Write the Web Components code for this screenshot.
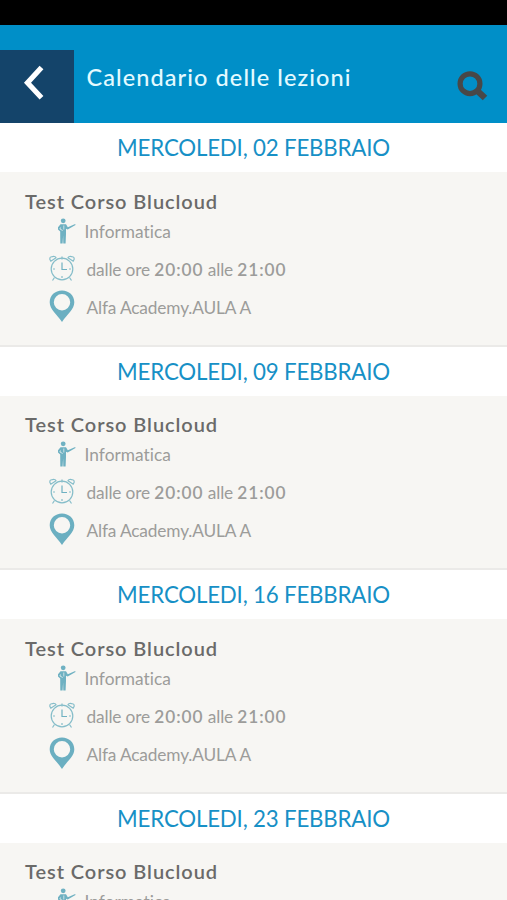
<!DOCTYPE html>
<html lang="it">
<head>
<meta charset="utf-8">
<title>Calendario delle lezioni</title>
<style>
  body{
    margin:0;
    height:900px;
    overflow:hidden;
    background:#fff;
    font-family:Lato, "Liberation Sans", sans-serif;
  }
</style>
</head>
<body>

<lesson-app>
  <app-header slot="header">Calendario delle lezioni</app-header>
  <lesson-day date="MERCOLEDI, 02 FEBBRAIO"></lesson-day>
  <lesson-day date="MERCOLEDI, 09 FEBBRAIO"></lesson-day>
  <lesson-day date="MERCOLEDI, 16 FEBBRAIO"></lesson-day>
  <lesson-day date="MERCOLEDI, 23 FEBBRAIO"></lesson-day>
</lesson-app>

<script>
class BaseElement extends HTMLElement {

    connectedCallback() {
      if (this.shadowRoot) return
      const template = document.createElement("template")
      template.innerHTML = this.getStyles() + this.getTemplate()
      this.attachShadow({mode :"open"}).appendChild(template.content.cloneNode(true))
    }

}

class LessonApp extends BaseElement {

    getStyles(){
      return `
        <style>
          :host{
            display:flex;
            flex-direction:column;
            height:900px;
            overflow:hidden;
          }
          .status{
            flex:none;
            height:25px;
            background:#000;
          }
          main{
            flex:1;
            min-height:0;
            overflow:hidden;
          }
        </style>
      `;
    }

    getTemplate(){
      return `
        <div class="status"></div>
        <slot name="header"></slot>
        <main><slot></slot></main>
      `;
    }

}

class AppHeader extends BaseElement {

    getStyles(){
      return `
        <style>
          :host{
            display:flex;
            flex:none;
            align-items:flex-end;
            height:98px;
            background:#008fc8;
            color:#e4faff;
          }
          .back{
            display:flex;
            width:74px;
            height:73px;
            background:#14446a;
          }
          h1{
            flex:1;
            margin:0 0 31px 12.5px;
            font-size:23.5px;
            line-height:30px;
            font-weight:500;
            letter-spacing:1.08px;
            white-space:nowrap;
          }
          .search{
            width:34px;
            height:34px;
            margin:0 17px 19px 0;
          }
        </style>
      `;
    }

    getTemplate(){
      return `
        <div class="back">
          <svg width="74" height="73" viewBox="0 0 74 73">
            <path d="M41.5 17.5 27.5 32.8 41.5 47.8" fill="none" stroke="#fff" stroke-width="5.2"/>
          </svg>
        </div>
        <h1><slot></slot></h1>
        <svg class="search" viewBox="0 0 34 34" fill="none" stroke="#484848">
          <circle cx="14" cy="13.7" r="9.9" stroke-width="5.2"/>
          <path d="M21 20.500 29 28" stroke-width="6.5"/>
        </svg>
      `;
    }

}

class LessonDay extends BaseElement {

    getStyles(){
      return `
        <style>
          :host{
            display:block;
          }
          h2{
            margin:0;
            height:49px;
            background:#fff;
            color:#1790c6;
            font-size:22.3px;
            line-height:50px;
            font-weight:400;
            letter-spacing:-.2px;
            text-align:center;
          }
        </style>
      `;
    }

    getTemplate(){
      return `
        <h2>${this.getAttribute("date")}</h2>
        <lesson-card>
          <span slot="title">Test Corso Blucloud</span>
          <lesson-info icon="teacher">Informatica</lesson-info>
          <lesson-info icon="clock">dalle ore <b>20:00</b> alle <b>21:00</b></lesson-info>
          <lesson-info icon="pin">Alfa Academy.AULA A</lesson-info>
        </lesson-card>
      `;
    }

}

class LessonCard extends BaseElement {

    getStyles(){
      return `
        <style>
          :host{
            display:block;
            box-sizing:border-box;
            height:174.5px;
            padding:18.5px 25px 0;
            background:#f7f6f3;
            border-bottom:2px solid #ebeae8;
          }
          h3{
            margin:0;
            color:#6a6a69;
            font-size:20px;
            line-height:21px;
            font-weight:600;
            letter-spacing:.93px;
          }
        </style>
      `;
    }

    getTemplate(){
      return `
        <h3><slot name="title"></slot></h3>
        <slot></slot>
      `;
    }

}

const icons = {
  teacher: `
    <svg width="34" height="30" viewBox="0 0 34 30" fill="#6fb1c2">
      <circle cx="13.2" cy="4.8" r="2.4"/>
      <path d="M10.5 8.3h5.500l1.800 3 7.400-3.300.3.900-7.800 4.600-1.700-.7V18l-.4 9.500h-2.300l-.2-8-.5 8h-2.300L10.200 18v-2.500L8 13.500v-2.300z"/>
      <path d="m10.5 11.500-.6 1.500 2.800 1.500M13.800 9.500v4" fill="none" stroke="#f7f6f3" stroke-width=".7"/>
    </svg>`,
  clock: `
    <svg width="34" height="34" viewBox="0 0 34 34" fill="none" stroke="#85bdc9" stroke-width="1.2">
      <circle cx="12" cy="17" r="10.8"/>
      <path d="M.8 9.200C-1.200 6.500 0 4.500 2 4.800c1.500-.7 3.500-.4 4 1zM23.200 9.200c2-2.700.8-4.700-1.200-4.400-1.500-.7-3.500-.4-4 1zM12 4.500v3M4.500 25.500 2.500 28.500M19.500 25.500l2 3M12 24v2M3 17h2M19 17h2"/>
      <path d="M12 10.500v7h5" stroke="#6fb1c2" stroke-width="1.2"/>
    </svg>`,
  pin: `
    <svg width="34" height="34" viewBox="0 0 34 34" fill="#6bafc1">
      <path fill-rule="evenodd" d="M12 .5C5 .5-.3 5.500-.3 12.200-.3 19.500 6.500 23.500 12 32c5.500-8.500 12.300-12.500 12.300-19.800C24.300 5.500 19 .5 12 .5zm0 3.600a8.200 8.200 0 1 1 0 16.400 8.200 8.200 0 0 1 0-16.400z"/>
    </svg>`
}

class LessonInfo extends BaseElement {

    getStyles(){
      return `
        <style>
          :host{
            display:flex;
            align-items:center;
            height:38px;
            padding-left:25px;
            color:#9c9c9a;
            font-size:17.3px;
            line-height:36px;
            letter-spacing:-.15px;
            font-variant-ligatures:none;
            white-space:pre;
          }
          :host([icon=teacher]) .text{
            margin-left:-2px;
            letter-spacing:.05px;
          }
          .icon{
            flex:none;
            display:flex;
            align-items:center;
            width:36.5px;
            height:38px;
          }
          .text{
            padding-top:2px;
          }
          svg{
            overflow:visible;
          }
          ::slotted(b){
            font-weight:600;
            letter-spacing:.95px;
          }
        </style>
      `;
    }

    getTemplate(){
      return `
        <span class="icon">${icons[this.getAttribute("icon")]}</span>
        <span class="text"><slot></slot></span>
      `;
    }

}

customElements.define('lesson-app',LessonApp);
customElements.define('app-header',AppHeader);
customElements.define('lesson-info',LessonInfo);
customElements.define('lesson-card',LessonCard);
customElements.define('lesson-day',LessonDay);
</script>
</body>
</html>
